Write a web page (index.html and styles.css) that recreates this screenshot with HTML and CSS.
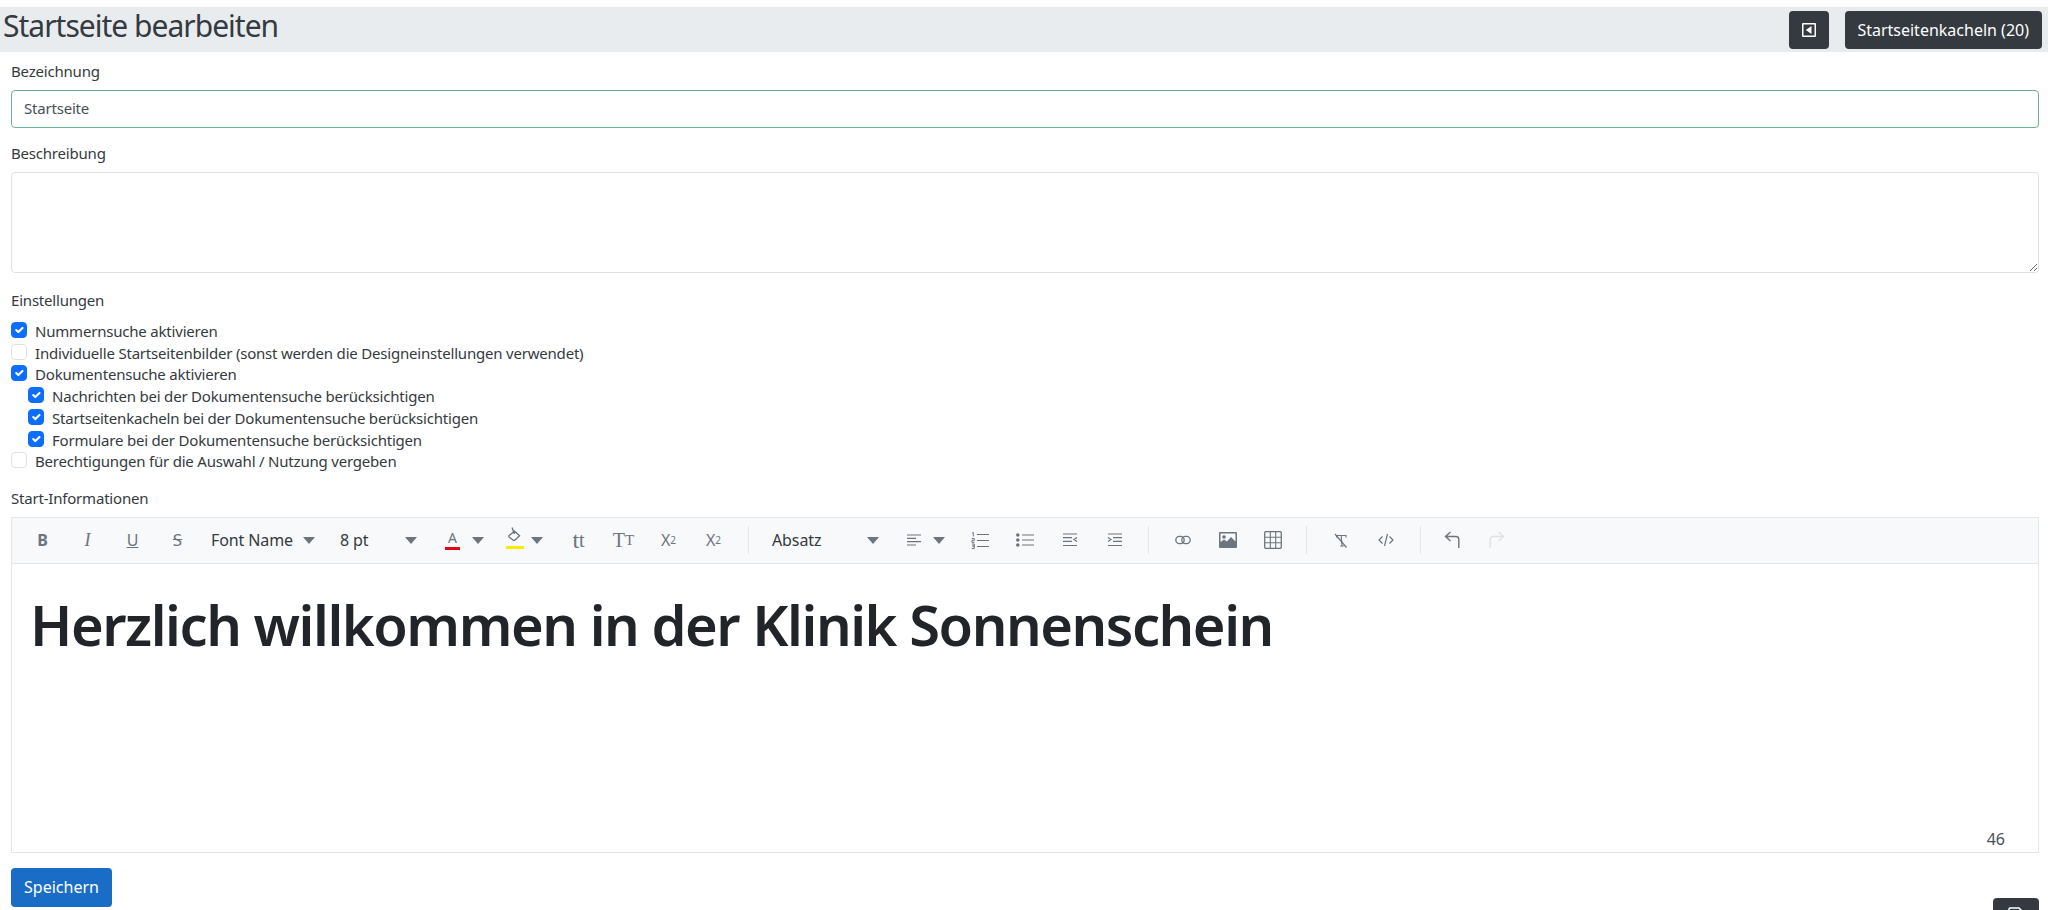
FILE: index.html
```html
<!DOCTYPE html>
<html lang="de">
<head>
<meta charset="utf-8">
<title>Startseite bearbeiten</title>
<link rel="stylesheet" href="styles.css">
</head>
<body>
<header class="page-head">
  <h1 class="page-title">Startseite bearbeiten</h1>
  <div class="head-actions">
    <button class="btn-dark btn-icon" aria-label="Zurück">
      <svg width="16" height="16" viewBox="0 0 16 16"><path fill="#fff" d="M2 1h12a1 1 0 0 1 1 1v12a1 1 0 0 1-1 1H2a1 1 0 0 1-1-1V2a1 1 0 0 1 1-1zm.5 1.500v11h11v-11h-11z"/><path fill="#fff" d="M10.500 4v8L4.800 8z"/></svg>
    </button>
    <button class="btn-dark btn-wide">Startseitenkacheln (20)</button>
  </div>
</header>
<main class="form">
  <label class="field-label first">Bezeichnung</label>
  <input class="text-input valid" type="text" value="Startseite">
  <label class="field-label second">Beschreibung</label>
  <textarea class="text-area"></textarea>
  <div class="field-label third">Einstellungen</div>
  <ul class="checks">
    <li class="check"><input type="checkbox" checked><span>Nummernsuche aktivieren</span></li>
    <li class="check"><input type="checkbox"><span>Individuelle Startseitenbilder (sonst werden die Designeinstellungen verwendet)</span></li>
    <li class="check"><input type="checkbox" checked><span>Dokumentensuche aktivieren</span></li>
    <li class="check sub"><input type="checkbox" checked><span>Nachrichten bei der Dokumentensuche berücksichtigen</span></li>
    <li class="check sub"><input type="checkbox" checked><span>Startseitenkacheln bei der Dokumentensuche berücksichtigen</span></li>
    <li class="check sub"><input type="checkbox" checked><span>Formulare bei der Dokumentensuche berücksichtigen</span></li>
    <li class="check"><input type="checkbox"><span>Berechtigungen für die Auswahl / Nutzung vergeben</span></li>
  </ul>
  <div class="field-label fourth">Start-Informationen</div>
  <section class="editor">
    <div class="toolbar">
      <span class="tool t-bold">B</span>
      <span class="tool t-italic">I</span>
      <span class="tool t-under">U</span>
      <span class="tool t-strike">S</span>
      <span class="drop d-font"><span>Font Name</span><i class="caret"></i></span>
      <span class="drop d-size"><span>8 pt</span><i class="caret"></i></span>
      <span class="color c-fore"><span class="fore-a">A</span><i class="caret"></i></span>
      <span class="color c-back">
        <svg class="fill-ic" width="18" height="22" viewBox="0 0 18 22"><path fill="none" stroke="#6c757d" stroke-width="1.300" d="M3.200 8.400 8.600 4.200l5 4.600-4.600 4.200a1.400 1.400 0 0 1-2 0L3.400 10.200a1.200 1.200 0 0 1-.2-1.800z"/><path fill="none" stroke="#6c757d" stroke-width="1.300" d="M8.400 7 6 .6"/><rect x="0" y="19" width="18" height="3" fill="#ffeb00"/></svg>
        <i class="caret"></i>
      </span>
      <span class="tool t-serif t-lower">t<small>t</small></span>
      <span class="tool t-serif">T<small>T</small></span>
      <span class="tool t-script">X<sup>2</sup></span>
      <span class="tool t-script">X<sub>2</sub></span>
      <i class="sep sep-first"></i>
      <span class="drop d-para"><span>Absatz</span><i class="caret"></i></span>
      <span class="color c-align">
        <svg width="16" height="14" viewBox="0 0 16 14"><path stroke="#6c757d" stroke-width="1.200" d="M1 2h14M1 5.300h9M1 8.600h14M1 12h9"/></svg>
        <i class="caret"></i>
      </span>
      <span class="tool"><svg width="18" height="17" viewBox="0 0 18 17"><path stroke="#6c757d" stroke-width="1.200" d="M6 2.500h12M6 8.500h12M6 14.500h12"/><path stroke="#6c757d" stroke-width="1" fill="none" d="M1 1 2.300.6V4.500M.8 6.500h2.500v1.800H1V10.300h2.500M.8 12h2.500v2H1.500h1.800v2.500H.8"/></svg></span>
      <span class="tool"><svg width="18" height="14" viewBox="0 0 18 14"><path stroke="#6c757d" stroke-width="1.200" d="M6 2h12M6 7h12M6 12h12"/><circle cx="1.800" cy="2" r="1.800" fill="#6c757d"/><circle cx="1.800" cy="7" r="1.800" fill="#6c757d"/><circle cx="1.800" cy="12" r="1.800" fill="#6c757d"/></svg></span>
      <span class="tool"><svg width="16" height="14" viewBox="0 0 16 14"><path stroke="#6c757d" stroke-width="1.200" fill="none" d="M1 1h14M1 4.700h9M1 8.300h9M1 12.500h14M15 4.500 12 6.500l3 2"/></svg></span>
      <span class="tool"><svg width="16" height="14" viewBox="0 0 16 14"><path stroke="#6c757d" stroke-width="1.200" fill="none" d="M1 1h14M6 4.700h9M6 8.300h9M1 12.500h14M1 4.500l3 2-3 2"/></svg></span>
      <i class="sep"></i>
      <span class="tool"><svg width="16" height="10" viewBox="0 0 16 10"><rect x=".8" y="1.300" width="8.400" height="7.400" rx="3.700" fill="none" stroke="#6c757d" stroke-width="1.300"/><rect x="6.800" y="1.300" width="8.400" height="7.400" rx="3.700" fill="none" stroke="#6c757d" stroke-width="1.300"/></svg></span>
      <span class="tool"><svg width="18" height="16" viewBox="0 0 18 16"><path fill="#6c757d" d="M1 0h16a1 1 0 0 1 1 1v14a1 1 0 0 1-1 1H1a1 1 0 0 1-1-1V1a1 1 0 0 1 1-1zm.5 1.500V10l3.500-2.500 3 2 4-4.500 4.500 4.500V1.500h-15z"/><circle cx="5" cy="5" r="1.800" fill="#6c757d"/></svg></span>
      <span class="tool"><svg width="18" height="18" viewBox="0 0 18 18"><rect x=".7" y=".7" width="16.600" height="16.600" rx="1" fill="none" stroke="#6c757d" stroke-width="1.300"/><path stroke="#6c757d" stroke-width="1.100" d="M6.300 1v16M11.700 1v16M1 6.300h16M1 11.700h16"/></svg></span>
      <i class="sep"></i>
      <span class="tool"><svg width="14" height="15" viewBox="0 0 14 15"><path fill="none" stroke="#6c757d" stroke-width="1.100" d="M2.500 4.500V2.500h9.500v2M7.200 2.500 8 13h-1.800M8 13h1.800"/><path stroke="#6c757d" stroke-width="1.200" d="M1 1l11.500 13.500"/></svg></span>
      <span class="tool"><svg width="16" height="14" viewBox="0 0 16 14"><path fill="none" stroke="#6c757d" stroke-width="1.200" d="M4.500 3.500 1 7l3.500 3.500M11.500 3.500 15 7l-3.500 3.500M9.500 1 6.500 13"/></svg></span>
      <i class="sep sep-wide"></i>
      <span class="tool"><svg width="16" height="18" viewBox="0 0 16 18"><path fill="none" stroke="#6c757d" stroke-width="1.400" d="M6.500 1 1.500 5.500l5 4.500M1.500 5.500H12a2.800 2.800 0 0 1 2.800 2.800V17"/></svg></span>
      <span class="tool"><svg width="16" height="18" viewBox="0 0 16 18"><path fill="none" stroke="#dfe2e5" stroke-width="1.400" d="M9.500 1l5 4.500-5 4.500M14.500 5.500H4a2.800 2.800 0 0 0-2.800 2.800V17"/></svg></span>
    </div>
    <div class="editor-body">
      <h2 class="welcome">Herzlich willkommen in der Klinik Sonnenschein</h2>
      <span class="counter">46</span>
    </div>
  </section>
  <button class="btn-save">Speichern</button>
</main>
<button class="btn-dark btn-float" aria-label="Speichern">
  <svg width="16" height="16" viewBox="0 0 16 16"><path fill="none" stroke="#fff" stroke-width="1.500" d="M2 1h9l3.500 3.500V14a1 1 0 0 1-1 1H2a1 1 0 0 1-1-1V2a1 1 0 0 1 1-1z"/></svg>
</button>
</body>
</html>
```
FILE: styles.css
```css
* { box-sizing: border-box; }
html, body { height: 100%; }
body {
  margin: 0;
  padding-top: 7px;
  overflow: hidden;
  background: #fff;
  color: #212529;
  font-family: "Noto Sans", "Open Sans", sans-serif;
  font-size: 15px;
  line-height: 22px;
}
.page-head {
  height: 45px;
  background: #e9ecef;
  display: flex;
  align-items: center;
  justify-content: space-between;
  padding: 0 6px 0 3px;
}
.page-title {
  margin: 0 0 7px;
  font-size: 30px;
  font-weight: 400;
  letter-spacing: -0.990px;
  line-height: 36px;
  color: #343a40;
}
.head-actions { display: flex; gap: 16px; }
.btn-dark {
  height: 38px;
  background: #343a40;
  color: #fff;
  border: 0;
  border-radius: 4px;
  font: inherit;
  font-size: 16px;
}
.btn-wide { padding: 0 13px 0 12px; }
.btn-icon { width: 40px; padding: 0; display: flex; align-items: center; justify-content: center; }
.form { padding: 0 9px 0 11px; display: flex; flex-direction: column; letter-spacing: -0.2px; }
.field-label { display: block; height: 22px; font-size: 15px; color: #343a40; }
.first { margin-top: 8px; }
.second { margin-top: 14px; margin-bottom: 8px; }
.third { margin-top: 16px; }
.fourth { margin-top: 14.500px; }
.text-input, .text-area {
  display: block;
  width: 100%;
  border: 1px solid #dee2e6;
  border-radius: 4px;
  font: inherit;
  letter-spacing: inherit;
  color: #495057;
  outline: 0;
}
.text-input { height: 38px; padding: 0 12px 2px; margin-top: 8px; }
.valid { border-color: #6fb08f; }
.text-area { height: 101px; padding: 6px 12px; }
.checks { list-style: none; margin: 9px 0 0; padding: 0; }
.check { height: 21.750px; display: flex; align-items: center; gap: 8px; color: #343a40; }
.sub { padding-left: 17px; }
.check input {
  appearance: none;
  margin: 0 0 2px;
  width: 16px;
  height: 16px;
  border: 1px solid #dee2e6;
  border-radius: 4px;
  background: #fff;
}
.check input:checked {
  background: #0d6efd url("data:image/svg+xml,%3Csvg xmlns='http://www.w3.org/2000/svg' viewBox='0 0 20 20'%3E%3Cpath fill='none' stroke='%23fff' stroke-linecap='round' stroke-linejoin='round' stroke-width='3' d='M6 10l3 3 6-6'/%3E%3C/svg%3E") center / contain no-repeat;
  border-color: #0d6efd;
}
.editor {
  margin-top: 8px;
  height: 336px;
  border: 1px solid #e3e6e9;
  display: flex;
  flex-direction: column;
  letter-spacing: normal;
}
.toolbar {
  height: 46px;
  flex: none;
  padding-left: 8px;
  background: #f8f9fa;
  border-bottom: 1px solid #e3e6e9;
  display: flex;
  align-items: center;
  color: #6c757d;
}
.tool {
  width: 45px;
  flex: none;
  display: flex;
  align-items: center;
  justify-content: center;
  height: 24px;
  font-size: 16px;
}
.t-bold { font-weight: 700; font-size: 16px; }
.t-italic { font-family: "Liberation Serif", serif; font-style: italic; font-size: 18px; }
.t-under { text-decoration: underline; }
.t-strike { text-decoration: line-through; font-size: 17px; }
.t-serif { font-family: "Liberation Serif", serif; font-size: 20px; }
.t-serif small { font-size: 15px; }
.t-lower { font-size: 24px; }
.t-lower small { font-size: 20px; }
.t-script { font-size: 16px; }
.t-script sup, .t-script sub { font-size: 10px; line-height: 0; }
.drop {
  flex: none;
  display: flex;
  align-items: center;
  justify-content: space-between;
  color: #343a40;
  font-size: 16px;
  letter-spacing: -0.1px;
}
.d-font { width: 122px; padding: 0 7px 0 11px; }
.d-size { width: 108px; padding: 0 13px 0 18px; }
.d-para { width: 130px; padding: 0 11px 0 12px; }
.caret {
  display: block;
  width: 0;
  height: 0;
  border-left: 6px solid transparent;
  border-right: 6px solid transparent;
  border-top: 7px solid #6c757d;
}
.color { flex: none; display: flex; align-items: center; justify-content: space-between; }
.c-fore { width: 66px; padding: 0 12px 0 15px; }
.c-back { width: 60px; padding: 0 13px 0 10px; }
.c-align { width: 67px; padding: 0 12px 0 16px; }
.fore-a {
  width: 15px;
  height: 20px;
  text-align: center;
  font-size: 14px;
  line-height: 16px;
  border-bottom: 3px solid #e60012;
}
.fill-ic { margin-top: -4px; }
.sep { flex: none; width: 1px; height: 28px; background: #e3e6e9; margin: 0 11px; }
.sep-first { margin-left: 12px; }
.sep-wide { margin-right: 8px; margin-left: 12px; }
.editor-body { position: relative; flex: 1; padding: 24px 18px 0; }
.welcome { margin: 0; font-size: 56px; line-height: 72px; font-weight: 600; letter-spacing: -1.450px; color: #212529; }
.counter { position: absolute; right: 33px; bottom: 2px; color: #495057; font-size: 16px; }
.btn-save {
  align-self: flex-start;
  margin-top: 15px;
  width: 101px;
  height: 39px;
  border: 0;
  border-radius: 4px;
  background: #1a6dc6;
  color: #fff;
  font: inherit;
  font-size: 16px;
  letter-spacing: normal;
}
.btn-float {
  position: fixed;
  right: 9px;
  bottom: -26px;
  width: 46px;
  padding: 0;
}
```
